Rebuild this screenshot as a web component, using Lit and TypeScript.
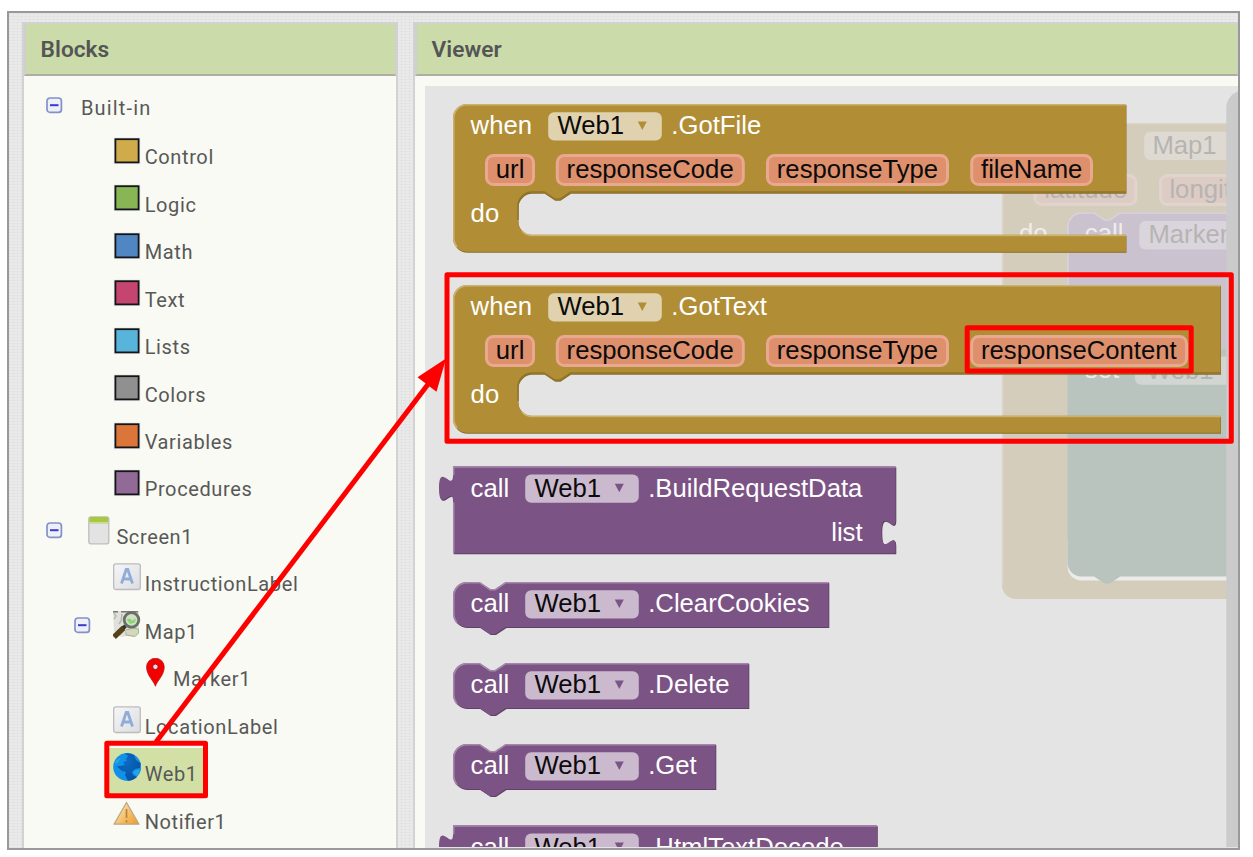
import { LitElement, html, svg, css, nothing } from "lit";
import { customElement, property } from "lit/decorators.js";

const DARK_GOLD = "#876c28";
const GOLD = "#b18e35";
const PURPLE = "#7c5385";
const DARK_PURPLE = "#5f4066";

/* Block geometry: tabs, notches and corners share one 1.75 scale. */
const TAB_DOWN = "c0,17.5 -14,-14 -14,13.1 s14,-4.4 14,13.1";
const TAB_UP = "c0,-17.5 -14,14 -14,-13.1 s14,4.4 14,-13.1";
const NOTCH_RIGHT = "l10.5,7 h5.25 l10.5,-7";
const NOTCH_LEFT = "l-10.5,7 h-5.25 l-10.5,-7";

const chip = (x: number, y: number, fill: string, arrow: string) => svg`
  <rect x=${x} y=${y + 8.2} width="113.6" height="28.3" rx="6" fill=${fill}></rect>
  <path d="M${x + 89.6},${y + 17.4} h9 l-4.5,8.6 z" fill=${arrow}></path>
  <text x=${x + 9.3} y=${y + 30.3} class="ink">Web1</text>`;

const param = (x: number, y: number, w: number, label: string) => svg`
  <rect x=${x + 1.5} y=${y + 1.5} width=${w - 3} height="29" rx="7"
    fill="#de8f6c" stroke="#e9a890" stroke-width="3"></rect>
  <text x=${x + 10.8} y=${y + 24.2} class="ink">${label}</text>`;

const eventBlock = (y: number, right: number, name: string, last: string, lastW: number) => {
  const d = `M453,${y + 14} a14,14 0 0 1 14,-14 H${right} v88.8 H570.5 ${NOTCH_LEFT} H532
    a14,14 0 0 0 -14,14 v14 a14,14 0 0 0 14,14 H${right} v17 H467 a14,14 0 0 1 -14,-14 z`;
  return svg`
    <path d=${d} fill=${DARK_GOLD} transform="translate(.5 1)"></path>
    <path d=${d} fill=${GOLD}></path>
    <path class="shine gold" d="M457,${y + 143} a14,14 0 0 1 -3.2,-9 V${y + 14} a13.3,13.3 0 0 1 13.3,-13.3 H${right}
      M522,${y + 127} a14,14 0 0 0 10,4.5 H${right}"></path>
    <path class="shade" d="M${right},${y + 88} H570.5 ${NOTCH_LEFT} H532 a14,14 0 0 0 -14,14 v14"></path>
    <text x="470.6" y=${y + 30.3}>when</text>
    ${chip(548.2, y, "#e0d2af", GOLD)}
    <text x="671.3" y=${y + 30.3}>${name}</text>
    ${param(485, y + 50, 50, "url")}
    ${param(555.8, y + 50, 189, "responseCode")}
    ${param(766, y + 50, 183, "responseType")}
    ${param(970.2, y + 50, lastW, last)}
    <text x="470.6" y=${y + 118.2}>do</text>`;
};

const callBlock = (y: number, right: number, name: string, kind: "statement" | "value" | "input") => {
  const d =
    kind === "statement"
      ? `M453,${y + 14} a14,14 0 0 1 14,-14 h12.5 ${NOTCH_RIGHT} H${right} v45 H505.7 ${NOTCH_LEFT} H467 a14,14 0 0 1 -14,-14 z`
      : kind === "value"
        ? `M453,${y} H${right} v45 H453 V${y + 35} ${TAB_UP} z`
        : `M453,${y} H${right} V${y + 53} ${TAB_DOWN} V${y + 87} H453 V${y + 35} ${TAB_UP} z`;
  const shine =
    kind === "statement"
      ? `M457,${y + 41} a14,14 0 0 1 -3.2,-9 V${y + 14} a13.3,13.3 0 0 1 13.3,-13.3 h12.5 ${NOTCH_RIGHT} H${right}`
      : `M453.7,${y + (kind === "input" ? 87 : 45)} V${y + 36} M453.7,${y + 9} V${y + 0.7} H${right}`;
  return svg`
    <path d=${d} fill=${DARK_PURPLE} transform="translate(.8 1)"></path>
    <path d=${d} fill=${PURPLE}></path>
    <path class="shine purple" d=${shine}></path>
    <text x="470.6" y=${y + 30.3}>call</text>
    ${chip(525.2, y, "#cbbace", PURPLE)}
    <text x="648.2" y=${y + 30.3}>${name}</text>
    ${kind === "input" ? svg`<text x="831.2" y=${y + 74.5}>list</text>` : nothing}`;
};

@customElement("block-workspace")
export class BlockWorkspace extends LitElement {
  static styles = css`
    :host { display: block; background: #e4e4e4; overflow: hidden; }
    svg { display: block; }
    text { font: 25.7px "Liberation Sans", Arial, sans-serif; fill: #fff; }
    .ink { fill: #0b0b0b; }
    .shine { fill: none; stroke-width: 1.5; }
    .gold { stroke: #cbb272; }
    .purple { stroke: #a687ac; }
    .shade { fill: none; stroke: #917329; stroke-width: 1.5; }
    .dim { fill: #b6b4b3; }
    .pale { fill: #efedeb; }
    .dimpill { fill: #ddccc4; stroke: #e1d4ce; stroke-width: 3; }
  `;

  render() {
    return html`<svg width="813" height="761" viewBox="425 86 813 761">
      <path fill="#d5cdbb" d="M1002,137 a14,14 0 0 1 14,-14 H1240 V599 H1016 a14,14 0 0 1 -14,-14 z"></path>
      <path fill="none" stroke="#dbd5c7" stroke-width="1.5" d="M1002.7,585 V137 a13.3,13.3 0 0 1 13.3,-13.3 H1240"></path>
      <rect x="1144.3" y="131.7" width="110" height="28.3" rx="6" fill="#dedad2"></rect>
      <text class="dim" x="1152.4" y="154.3">Map1</text>
      <rect class="dimpill" x="1035" y="175.5" width="101" height="29" rx="7"></rect>
      <text class="dim" x="1044.2" y="198.2">latitude</text>
      <rect class="dimpill" x="1160.5" y="175.5" width="110" height="29" rx="7"></rect>
      <text class="dim" x="1169.4" y="198.2">longitude</text>
      <text class="pale" x="1019" y="242">do</text>
      <path fill="#ececea" d="M1067.5,540 H1240 V580.5 H1081.5 a14,14 0 0 1 -14,-14 z"></path>
      <path fill="#cac2cf" d="M1067.5,226.5 a14,14 0 0 1 14,-14 h12.5 ${NOTCH_RIGHT} H1240 V349 H1067.5 z"></path>
      <path fill="none" stroke="#d9d4dc" stroke-width="1.5" d="M1068,349 V226.5 a13.5,13.5 0 0 1 13.5,-13.5 h12.5 ${NOTCH_RIGHT} H1240"></path>
      <text class="pale" x="1084.8" y="242">call</text>
      <rect x="1139.3" y="221" width="110" height="28.5" rx="6" fill="#dad4dc"></rect>
      <text class="dim" x="1148.4" y="243">Marker1</text>
      <path fill="#bac4be" d="M1067.5,349 H1240 V576.5 H1120.3 ${NOTCH_LEFT} H1081.5 a14,14 0 0 1 -14,-14 z"></path>
      <text class="pale" x="1084.8" y="378">set</text>
      <rect x="1135" y="356.5" width="120" height="28.3" rx="6" fill="#d1d6d2"></rect>
      <text class="dim" x="1147" y="378.5">Web1</text>
      <path fill="#cbcbcb" d="M1226.3,847 V108 a17,17 0 0 1 14,-17 V847 z"></path>
      ${eventBlock(104, 1126, ".GotFile", "fileName", 122.8)}
      ${eventBlock(285, 1220.5, ".GotText", "responseContent", 217.8)}
      ${callBlock(466.3, 895.5, ".BuildRequestData", "input")}
      ${callBlock(582, 828.5, ".ClearCookies", "statement")}
      ${callBlock(663, 748.5, ".Delete", "statement")}
      ${callBlock(744, 715.5, ".Get", "statement")}
      ${callBlock(825.2, 877, ".HtmlTextDecode", "value")}
    </svg>`;
  }
}

const labelIcon = svg`
  <defs><linearGradient id="lg" x2="1" y2="1"><stop stop-color="#f6f6f8"></stop><stop offset="1" stop-color="#dcdde0"></stop></linearGradient></defs>
  <rect x=".7" y=".9" width="26.6" height="25.6" rx="2" fill="url(#lg)" stroke="#bcbcc0" stroke-width="1.3"></rect>
  <path d="M8.5,20.5 L13.2,6.5 H14.8 L19.5,20.5 M10.2,16 H17.8" fill="none" stroke="#8fadd8" stroke-width="2.8"></path>`;

const icons: Record<string, unknown> = {
  label: labelIcon,
  screen: svg`
    <rect x="3.8" y=".8" width="20" height="27" rx="2" fill="#e3e3e3" stroke="#bdbdbd" stroke-width="1.3"></rect>
    <path d="M4.4,6 V2.5 a1.5,1.5 0 0 1 1.5,-1.5 H21.7 a1.5,1.5 0 0 1 1.5,1.5 V6 z" fill="#a9c83f"></path>
    <path d="M4.4,6 H23.2 V8 H4.4 z" fill="#cdd9a2"></path>`,
  map: svg`
    <path d="M0,0 H26 V22 L23,25.5 L14,25 L8,26 L1,20 z" fill="#dfe1da"></path>
    <path d="M0,.7 H5 M8,.7 H25" stroke="#77796f" stroke-width="1.4"></path>
    <path d="M1,2 L3,5 L1,8 M9,3 L8,10 L6,13" fill="none" stroke="#b5b8b0" stroke-width="1.4"></path>
    <path d="M13,19 L20,17 L25.5,18 V22 L22,25.5 L13,24 z" fill="#cbdcb4" stroke="#a8ad9d"></path>
    <path d="M13,20 L17,22 L21,21" fill="none" stroke="#e6cfcb" stroke-width="2"></path>
    <circle cx="18.5" cy="8.8" r="7.3" fill="#cfe0c8" stroke="#6b7066" stroke-width="2.8"></circle>
    <path d="M13.5,8.5 L17,7.5 L19,9.5 L23,7.5 L22,11.5 L17,13 z" fill="#8fd670"></path>
    <path d="M12.5,15 L9.5,17.5" stroke="#33322c" stroke-width="4"></path>
    <path d="M10.5,17 L1,26" stroke="#564218" stroke-width="5.5"></path>`,
  pin: svg`
    <path d="M14.4,28.2 C13,23 5.6,17.5 5.6,9 A8.7,8.7 0 0 1 23.2,9 C23.2,17.5 15.8,23 14.4,28.2 z" fill="#f40000" stroke="#b71212" stroke-width=".8"></path>
    <circle cx="14.4" cy="8.8" r="2.7" fill="#f3d9d9" stroke="#8e0000" stroke-width=".8"></circle>`,
  globe: svg`
    <defs><radialGradient id="sea" cx=".4" cy=".3" r=".75"><stop stop-color="#0b6ac4"></stop><stop offset="1" stop-color="#0750a2"></stop></radialGradient></defs>
    <circle cx="14.2" cy="13.9" r="14" fill="#1292e6"></circle>
    <path d="M12,.5 L15,3 L13,6 L14,8 L10,9 L12,12 L4,13.5 L9,18 L13,19 L12,22 L15,27.7 A14,14 0 0 0 24,24 L20,22 L19,19 L22,16 L27,15 L27.5,10 L23,7 L21,2 A14,14 0 0 0 12,.5 z" fill="url(#sea)"></path>
    <path d="M2,9 L5,6 L8,4.5 L6,8 L3.5,11 z" fill="#2ba4ee"></path>
    <path d="M20,19 L25,16.5 L27,18 L24,23 z" fill="#27a4ec"></path>`,
  warning: svg`
    <defs><linearGradient id="amber" x2="1" y2=".8"><stop stop-color="#fff0cd"></stop><stop offset=".5" stop-color="#f7c877"></stop><stop offset="1" stop-color="#ef9f2f"></stop></linearGradient></defs>
    <path d="M13.5,1.5 L26,23.2 H1 z" fill="url(#amber)" stroke="#b9a88c" stroke-width="1.3" stroke-linejoin="round"></path>
    <path d="M13.5,8 V17 M13.5,19.3 V21.5" stroke="#b98440" stroke-width="1.7"></path>`,
};

interface Item {
  label: string;
  depth: number;
  swatch?: string;
  icon?: string;
  open?: boolean;
  selected?: boolean;
}

const items: Item[] = [
  { label: "Control", depth: 1, swatch: "#cfab4b" },
  { label: "Logic", depth: 1, swatch: "#88b654" },
  { label: "Math", depth: 1, swatch: "#5087c3" },
  { label: "Text", depth: 1, swatch: "#c4456f" },
  { label: "Lists", depth: 1, swatch: "#59b4dc" },
  { label: "Colors", depth: 1, swatch: "#909090" },
  { label: "Variables", depth: 1, swatch: "#db753a" },
  { label: "Procedures", depth: 1, swatch: "#916a98" },
  { label: "Screen1", depth: 0, icon: "screen", open: true },
  { label: "InstructionLabel", depth: 1, icon: "label" },
  { label: "Map1", depth: 1, icon: "map", open: true },
  { label: "Marker1", depth: 2, icon: "pin" },
  { label: "LocationLabel", depth: 1, icon: "label" },
  { label: "Web1", depth: 1, icon: "globe", selected: true },
  { label: "Notifier1", depth: 1, icon: "warning" },
];

@customElement("block-tree")
export class BlockTree extends LitElement {
  static styles = css`
    :host {
      display: block;
      padding-top: 5.5px;
      font: 20px/24px Roboto, sans-serif;
      font-feature-settings: "liga" 1;
      letter-spacing: 0.62px;
      color: #585858;
    }
    .row { display: flex; align-items: flex-start; height: 47.48px; padding-left: 22px; }
    .row.root { height: 49px; }
    .d1 { padding-left: 50.3px; }
    .d2 { padding-left: 78.6px; }
    .slot { width: 30.7px; flex: none; padding-top: 11.8px; }
    .root .slot { width: 35px; padding-top: 15px; }
    .slot svg, .icon { display: block; }
    .item { display: flex; align-items: flex-start; padding: 0 8px; height: 46.5px; gap: 3.7px; }
    .selected { background: #d2e0a6; }
    .icon { flex: none; margin-top: 5.5px; }
    .label { padding-top: 14.7px; white-space: nowrap; }
    .root .label { padding-top: 14px; letter-spacing: 1.15px; }
  `;

  private toggle() {
    return html`<svg width="17" height="17" viewBox="0 0 17 17">
      <rect x="1" y="1" width="14.4" height="14.4" rx="3" fill="#eef0f8" stroke="#8390cb" stroke-width="1.7"></rect>
      <path d="M4,8.2 H12.5" stroke="#3a3ad0" stroke-width="2"></path>
    </svg>`;
  }

  render() {
    return html`
      <div class="row root">
        <div class="slot">${this.toggle()}</div>
        <div class="label">Built-in</div>
      </div>
      ${items.map(
        (it) => html`<div class="row d${it.depth}">
          <div class="slot">${it.open ? this.toggle() : nothing}</div>
          <div class="item ${it.selected ? "selected" : ""}">
            <svg class="icon" width="28" height="29" viewBox="0 0 28 29">
              ${it.swatch
                ? svg`<rect x=".8" y="1.6" width="26.5" height="26.5" fill="#e2e6ee"></rect>
                  <rect x="2.4" y="3.2" width="23.2" height="23.2" fill=${it.swatch} stroke="#151515" stroke-width="1.8"></rect>`
                : icons[it.icon!]}
            </svg>
            <div class="label">${it.label}</div>
          </div>
        </div>`
      )}
    `;
  }
}

@customElement("app-panel")
export class AppPanel extends LitElement {
  @property() heading = "";

  static styles = css`
    :host {
      display: flex;
      flex-direction: column;
      box-sizing: border-box;
      border: 2px solid #d2d2d2;
      border-bottom: 0;
      background: #f8faf3;
      overflow: hidden;
    }
    .head {
      flex: none;
      box-sizing: border-box;
      height: 52px;
      border: solid #cfcfcf;
      border-width: 0 1px 0 2px;
      border-bottom: 2px solid #adaea6;
      background: #cbdcaa;
      padding: 12px 0 0 14.6px;
      font: 600 22.7px/27px Roboto, sans-serif;
      color: #555;
    }
    .body { flex: 1; min-height: 0; display: flex; flex-direction: column; }
  `;

  render() {
    return html`<div class="head">${this.heading}</div><div class="body"><slot></slot></div>`;
  }
}

@customElement("app-root")
export class AppRoot extends LitElement {
  static styles = css`
    :host {
      display: block;
      position: relative;
      box-sizing: border-box;
      width: 1253px;
      height: 857px;
      padding: 11px 12px 7px 7px;
      background: #fff;
      overflow: hidden;
    }
    .frame {
      box-sizing: border-box;
      height: 839px;
      width: 1233px;
      border: 2px solid #999;
      display: flex;
      gap: 15px;
      padding: 9px 0 0 13px;
      overflow: hidden;
      background:
        repeating-linear-gradient(0deg, rgba(0, 0, 0, 0.022) 0 1px, transparent 1px 3px),
        repeating-linear-gradient(90deg, rgba(0, 0, 0, 0.022) 0 1px, transparent 1px 4px),
        #eaeaea;
    }
    .blocks { flex: none; width: 376px; }
    .viewer { flex: 1; border-right: 0; }
    .canvas { margin: 10px 0 0 10px; flex: 1; }
    .marks { position: absolute; inset: 0; pointer-events: none; }
  `;

  render() {
    return html`
      <div class="frame">
        <app-panel class="blocks" heading="Blocks"><block-tree></block-tree></app-panel>
        <app-panel class="viewer" heading="Viewer"><block-workspace class="canvas"></block-workspace></app-panel>
      </div>
      <svg class="marks" width="1253" height="857" viewBox="0 0 1253 857">
        <g fill="none" stroke="#f00" stroke-width="5" stroke-linejoin="round">
          <rect x="106.8" y="743.3" width="98.7" height="52.4"></rect>
          <rect x="447" y="274.8" width="784.3" height="166.5"></rect>
          <rect x="967.2" y="327.8" width="224" height="43.2"></rect>
          <path d="M156,742 L429,383"></path>
        </g>
        <path d="M446,358.5 L417.5,377.2 L436.5,391.7 z" fill="#f00"></path>
      </svg>
    `;
  }
}
